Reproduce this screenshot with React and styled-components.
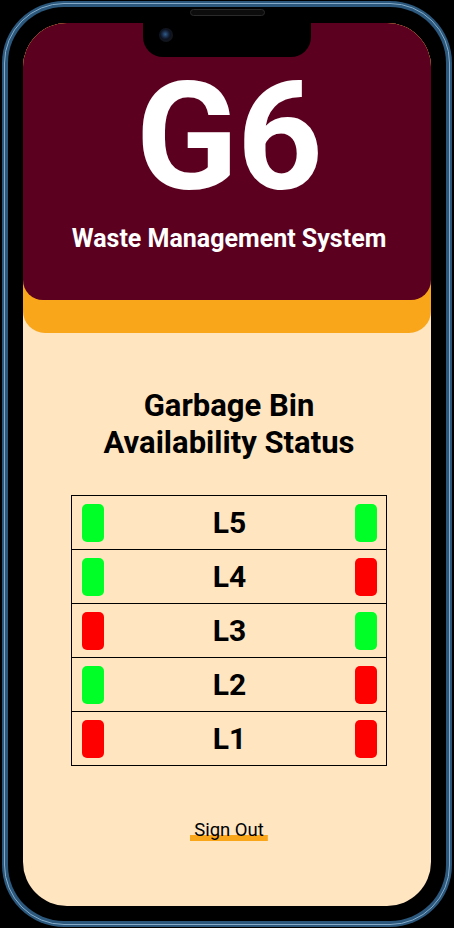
import React from "react";
import styled, { createGlobalStyle } from "styled-components";

const levels = [
  { name: "L5", left: true, right: true },
  { name: "L4", left: true, right: false },
  { name: "L3", left: false, right: true },
  { name: "L2", left: true, right: false },
  { name: "L1", left: false, right: false }
];

const App = () => {
  return (
    <>
      <GlobalStyle />
      <Rim>
        <RimLine>
          <Bezel>
            <Notch>
              <Speaker />
              <Camera />
            </Notch>
            <Screen>
              <HeaderWrap>
                <Header>
                  <Logo>G6</Logo>
                  <Subtitle>Waste Management System</Subtitle>
                </Header>
              </HeaderWrap>
              <Body>
                <Title>
                  Garbage Bin
                  <br />
                  Availability Status
                </Title>
                <BinTable>
                  {levels.map((lvl) => (
                    <Row key={lvl.name}>
                      <Bin free={lvl.left} />
                      <Level>{lvl.name}</Level>
                      <Bin free={lvl.right} />
                    </Row>
                  ))}
                </BinTable>
                <SignOut>Sign Out</SignOut>
              </Body>
            </Screen>
          </Bezel>
        </RimLine>
      </Rim>
    </>
  );
};

export default App;

const GlobalStyle = createGlobalStyle`
  html, body {
    margin: 0;
    padding: 0;
    background: #000;
  }
  body {
    font-family: Roboto, "Liberation Sans", sans-serif;
  }
  * {
    box-sizing: border-box;
  }
`;

const Rim = styled.div`
  width: 450px;
  height: 926px;
  margin: 1px 2px;
  padding: 2px;
  border-radius: 62px;
  background: #2b587c;
`;

const RimLine = styled.div`
  height: 100%;
  padding: 3px;
  border-radius: 60px;
  border: 1px solid #86abc8;
  background: #2b587c;
`;

const Bezel = styled.div`
  position: relative;
  height: 100%;
  padding: 16px 15px 15px 15px;
  border-radius: 56px;
  background: #000;
`;

const Notch = styled.div`
  position: absolute;
  top: 0;
  left: 135px;
  width: 168px;
  height: 50px;
  background: #000;
  border-radius: 0 0 20px 20px;
  z-index: 2;

  ::before,
  ::after {
    content: "";
    position: absolute;
    top: 16px;
    width: 8px;
    height: 8px;
  }
  ::before {
    left: -8px;
    background: radial-gradient(circle at 0 100%, transparent 8px, #000 8.5px);
  }
  ::after {
    right: -8px;
    background: radial-gradient(circle at 100% 100%, transparent 8px, #000 8.5px);
  }
`;

const Speaker = styled.div`
  position: absolute;
  top: 2px;
  left: 47px;
  width: 75px;
  height: 7px;
  border-radius: 4px;
  border: 1px solid #2a2a2a;
  background: #0c0c0c;
`;

const Camera = styled.div`
  position: absolute;
  top: 21px;
  left: 16px;
  width: 14px;
  height: 14px;
  border-radius: 50%;
  background: radial-gradient(circle at 45% 45%, #2f5d8a 0, #1a2c48 3px, #0d1320 5px, #12161c 7px);
`;

const Screen = styled.div`
  height: 100%;
  border-radius: 44px;
  overflow: hidden;
  background: #ffe5c0;
  display: flex;
  flex-direction: column;
`;

const HeaderWrap = styled.div`
  background: #f9a61b;
  padding-bottom: 33px;
  border-radius: 0 0 22px 22px;
`;

const Header = styled.header`
  height: 277px;
  background: #5c0020;
  border-radius: 0 0 20px 20px;
  display: flex;
  flex-direction: column;
  align-items: center;
  padding: 40px 0 0 4px;
  color: #fff;
`;

const Logo = styled.h1`
  margin: 0;
  font-size: 150px;
  line-height: 150px;
  font-weight: 700;
  letter-spacing: -1px;
`;

const Subtitle = styled.h2`
  margin: 11px 0 0;
  font-size: 25px;
  line-height: 1.2;
  font-weight: 700;
`;

const Body = styled.main`
  display: flex;
  flex-direction: column;
  align-items: center;
  padding: 54px 0 0 4px;
`;

const Title = styled.h3`
  margin: 0;
  text-align: center;
  font-size: 31px;
  line-height: 37px;
  font-weight: 700;
  color: #000;
`;

const BinTable = styled.div`
  margin-top: 34px;
  width: 316px;
  border: 1px solid #000;
`;

const Row = styled.div`
  display: grid;
  grid-template-columns: 22px 1fr 22px;
  align-items: center;
  height: 53px;
  padding: 0 9px 0 10px;
  & + & {
    border-top: 1px solid #000;
    height: 54px;
  }
`;

const Bin = styled.div`
  height: 38px;
  border-radius: 5px;
  background: ${({ free }) => (free ? "#00ff26" : "#ff0000")};
`;

const Level = styled.span`
  text-align: center;
  font-size: 30px;
  font-weight: 700;
  color: #000;
`;

const SignOut = styled.button`
  margin-top: 53px;
  padding: 0 4px;
  border: none;
  font-family: Roboto, "Liberation Sans", sans-serif;
  font-size: 18.5px;
  line-height: 1.2;
  color: #000;
  cursor: pointer;
  background: linear-gradient(#f9a61b, #f9a61b) bottom / 100% 6px no-repeat;
`;
